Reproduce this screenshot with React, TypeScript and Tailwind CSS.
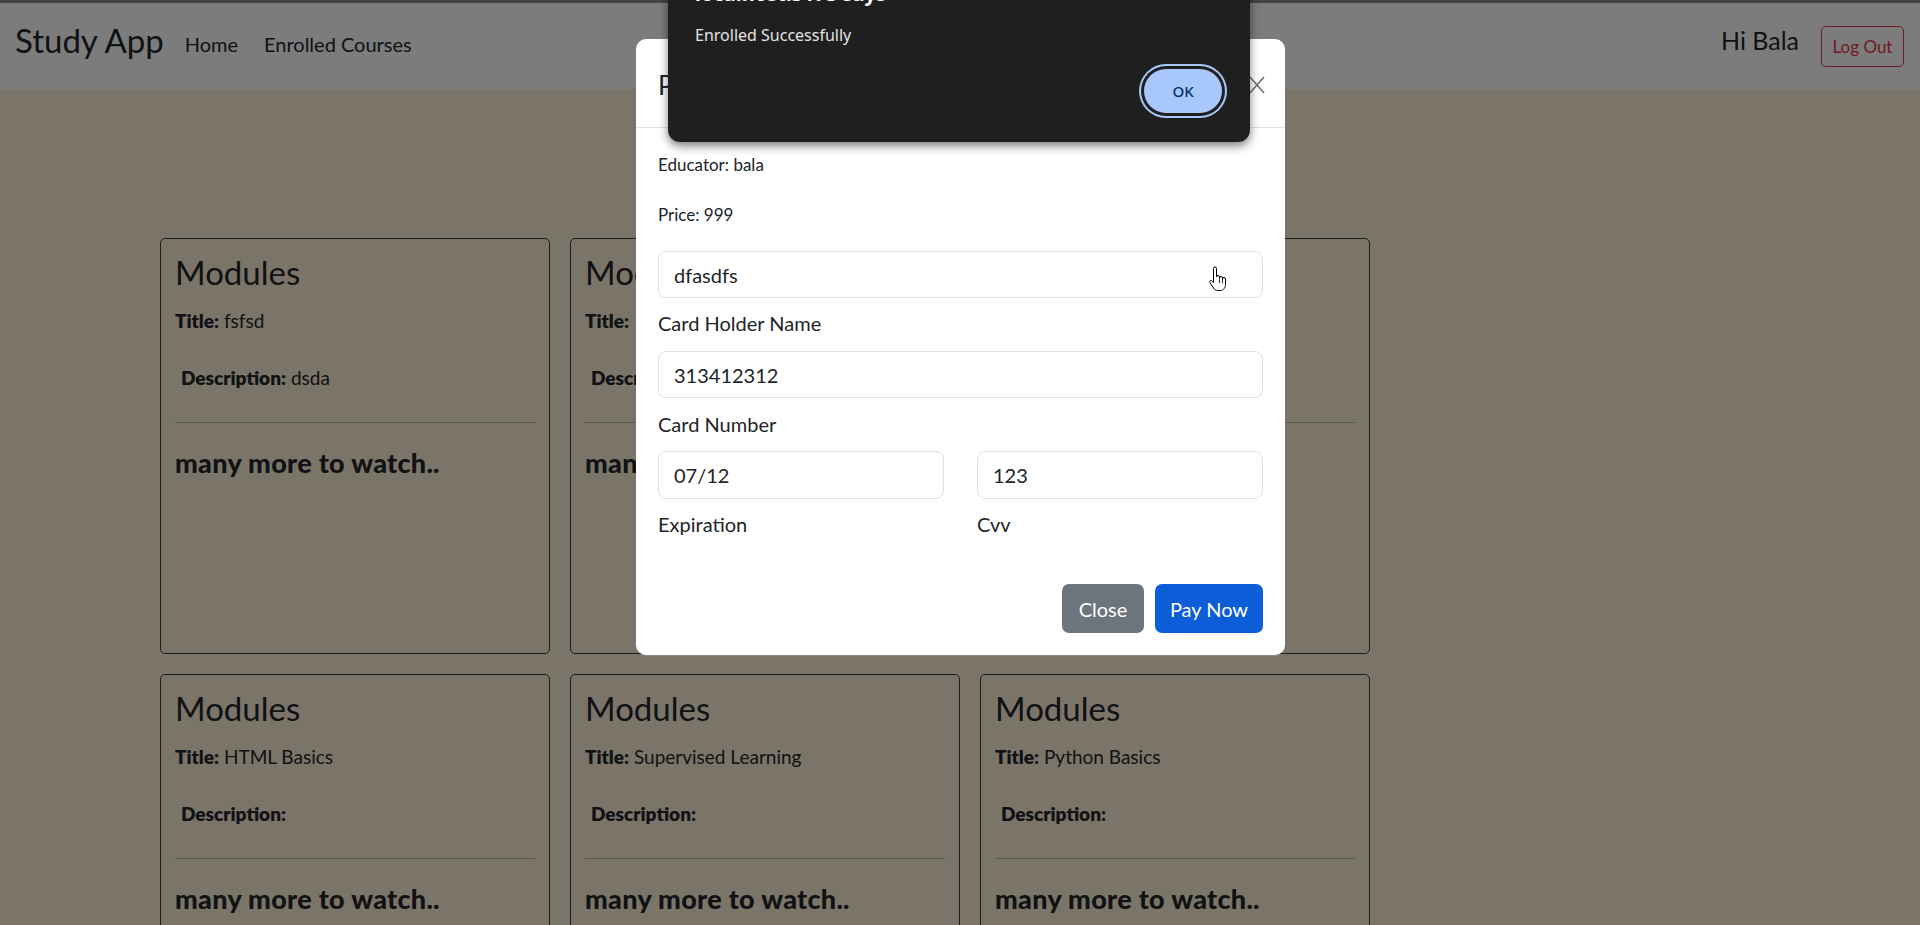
import React from "react";

type Module = { title: string; description: string };

const modules: Module[] = [
  { title: "fsfsd", description: "dsda" },
  { title: "", description: "" },
  { title: "sdfsdf", description: "sdfs" },
  { title: "HTML Basics", description: "" },
  { title: "Supervised Learning", description: "" },
  { title: "Python Basics", description: "" },
];

function ModuleCard({ mod }: { mod: Module }) {
  return (
    <div className="h-[416px] rounded-[5px] border border-[#3a3a3a] px-[14px] pt-[14px] text-[#212529]">
      <h2 className="text-[33px] leading-[1.2]">Modules</h2>
      <p className="mt-[14px] text-[19px] leading-[28px]">
        <b className="font-extrabold">Title:</b> {mod.title}
      </p>
      <p className="ml-[6px] mt-[29px] text-[19px] leading-[28px]">
        <b className="font-extrabold">Description:</b> {mod.description}
      </p>
      <hr className="mt-[30px] border-black/25" />
      <h3 className="mt-[24px] text-[27px] font-black leading-[1.2] tracking-[0.3px]">
        many more to watch..
      </h3>
    </div>
  );
}

function HandCursor() {
  return (
    <svg
      width="20"
      height="26"
      viewBox="0 0 20 26"
      className="absolute left-[1208px] top-[266px]"
    >
      <path
        d="M5.5 2.5a1.5 1.5 0 0 1 3 0V11a1.5 1.5 0 0 1 3 0v1a1.5 1.5 0 0 1 3 0v1a1.5 1.5 0 0 1 3 0v5.5c0 3-2 6-5 6H9.5c-2 0-3-1-4-2.5L1.8 16.2c-.7-1 .7-2.3 1.7-1.5L5.5 16.5Z"
        fill="#fff"
        stroke="#000"
        strokeWidth="1"
        strokeLinejoin="round"
      />
      <path d="M11.5 12v5M14.5 13v4.5" stroke="#000" strokeWidth="0.8" />
    </svg>
  );
}

export default function App() {
  return (
    <div className="relative h-[925px] overflow-hidden bg-[#f6ead3] font-[Lato,sans-serif] text-[#212529]">
      <div className="h-[3px] bg-[#888]" />

      {/* Navbar */}
      <nav className="flex h-[86px] items-start bg-[#f8f9fa] pl-[15px] pr-[16px]">
        <span className="mt-[17px] text-[33px] leading-[40px]">Study App</span>
        <a className="ml-[21px] mt-[26px] text-[20px] leading-[30px]">Home</a>
        <a className="ml-[26px] mt-[26px] text-[20px] leading-[30px]">
          Enrolled Courses
        </a>
        <span className="ml-auto mt-[19px] text-[25px] leading-[36px]">
          Hi Bala
        </span>
        <button className="ml-[22px] mt-[23px] flex h-[41px] w-[83px] items-center justify-center rounded-[5px] border border-[#dc3545] text-[17px] text-[#dc3545]">
          Log Out
        </button>
      </nav>

      {/* Course modules */}
      <main className="pl-[160px] pt-[149px]">
        <div className="grid grid-cols-[repeat(3,390px)] gap-5">
          {modules.map((m, i) => (
            <ModuleCard key={i} mod={m} />
          ))}
        </div>
      </main>

      {/* Backdrop */}
      <div className="absolute inset-0 bg-black/50" />

      {/* Payment modal */}
      <div className="absolute left-[636px] top-[39px] w-[649px] rounded-[10px] bg-white shadow-[0_1px_0_rgba(255,255,255,0.15)]">
        <div className="flex h-[89px] items-center justify-between border-b border-[#dee2e6] pl-[22px] pr-[20px] pt-[4px]">
          <h5 className="text-[26px] leading-[39px]">Payment</h5>
          <svg width="16" height="18" viewBox="0 0 16 18">
            <path d="M1 1l14 16M15 1L1 17" stroke="#6f6f6f" strokeWidth="1.6" />
          </svg>
        </div>
        <div className="px-[22px] pt-[23px]">
          <p className="text-[17px] leading-[27px]">Educator: bala</p>
          <p className="mt-[23px] text-[17px] leading-[27px]">Price: 999</p>
          <div className="mt-[23px] flex h-[47px] items-center rounded-[8px] border border-[#dee2e6] px-[15px] text-[20px]">
            dfasdfs
          </div>
          <label className="mt-[10px] block text-[20px] leading-[30px]">
            Card Holder Name
          </label>
          <div className="mt-[13px] flex h-[47px] items-center rounded-[8px] border border-[#dee2e6] px-[15px] text-[20px]">
            313412312
          </div>
          <label className="mt-[11px] block text-[20px] leading-[30px]">
            Card Number
          </label>
          <div className="mt-[12px] grid grid-cols-2 gap-[33px]">
            <div>
              <div className="flex h-[48px] items-center rounded-[8px] border border-[#dee2e6] px-[15px] text-[20px]">
                07/12
              </div>
              <label className="mt-[10px] block text-[20px] leading-[30px]">
                Expiration
              </label>
            </div>
            <div>
              <div className="flex h-[48px] items-center rounded-[8px] border border-[#dee2e6] px-[15px] text-[20px]">
                123
              </div>
              <label className="mt-[10px] block text-[20px] leading-[30px]">
                Cvv
              </label>
            </div>
          </div>
        </div>
        <div className="flex justify-end gap-[11px] px-[22px] pb-[22px] pt-[45px]">
          <button className="h-[49px] w-[82px] rounded-[7px] bg-[#6c757d] text-[20px] text-white">
            Close
          </button>
          <button className="h-[49px] w-[108px] rounded-[7px] bg-[#0b5ed7] text-[20px] text-white">
            Pay Now
          </button>
        </div>
      </div>

      <HandCursor />

      {/* Browser alert */}
      <div className="absolute left-[668px] top-[-40px] h-[182px] w-[582px] rounded-[12px] bg-[#1f1f1f] pl-[27px] pr-[28px] font-['Noto_Sans',sans-serif] shadow-[0_4px_10px_rgba(0,0,0,0.5)]">
        <p className="mt-[22px] text-[20px] font-bold leading-[24px] text-white">
          localhost:5173 says
        </p>
        <p className="mt-[18px] text-[16px] leading-[22px] text-[#e3e3e3]">
          Enrolled Successfully
        </p>
        <div className="mt-[23px] flex justify-end">
          <button className="h-[44px] w-[78px] rounded-full bg-[#a8c7fa] text-[15px] font-medium text-[#062e6f] shadow-[0_0_0_3px_#1f1f1f,0_0_0_5px_#a8c7fa]">
            OK
          </button>
        </div>
      </div>
    </div>
  );
}
